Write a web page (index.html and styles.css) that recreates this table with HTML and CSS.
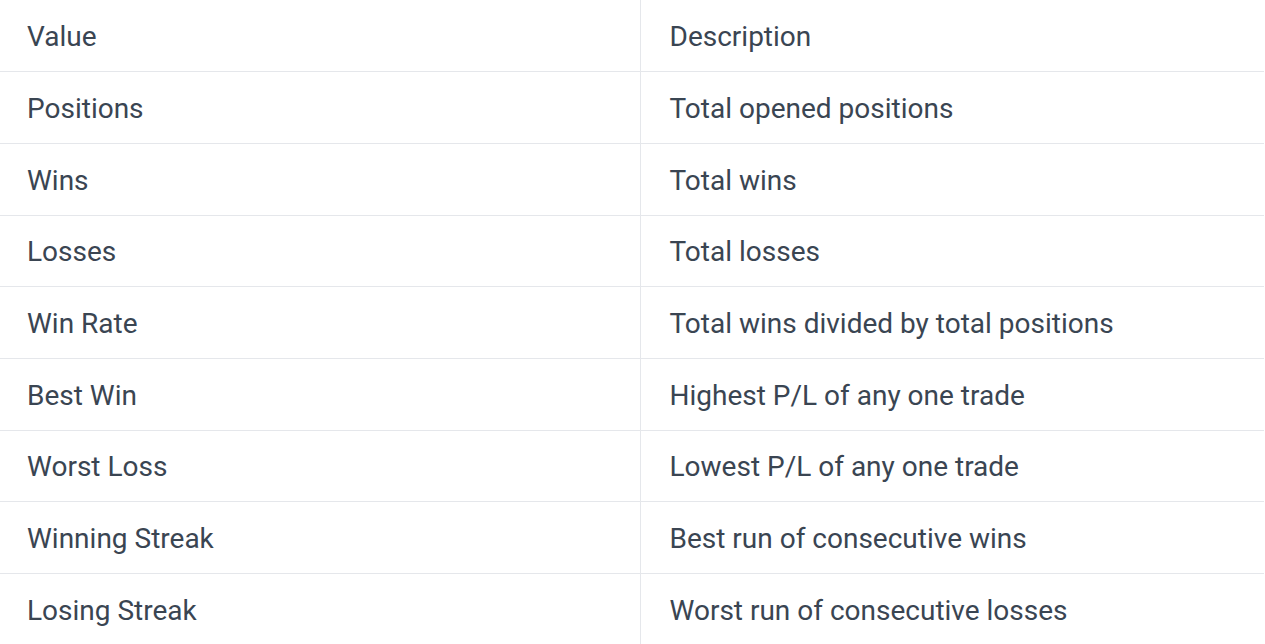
FILE: index.html
```html
<!DOCTYPE html>
<html lang="en">
<head>
<meta charset="utf-8">
<title>Stats</title>
<link rel="stylesheet" href="styles.css">
</head>
<body>
<table class="stats">
  <thead>
    <tr><th>Value</th><th>Description</th></tr>
  </thead>
  <tbody>
    <tr><td>Positions</td><td>Total opened positions</td></tr>
    <tr><td>Wins</td><td>Total wins</td></tr>
    <tr><td>Losses</td><td>Total losses</td></tr>
    <tr><td>Win Rate</td><td>Total wins divided by total positions</td></tr>
    <tr><td>Best Win</td><td>Highest P/L of any one trade</td></tr>
    <tr><td>Worst Loss</td><td>Lowest P/L of any one trade</td></tr>
    <tr><td>Winning Streak</td><td>Best run of consecutive wins</td></tr>
    <tr><td>Losing Streak</td><td>Worst run of consecutive losses</td></tr>
  </tbody>
</table>
</body>
</html>
```

FILE: styles.css
```css
html, body {
  margin: 0;
  padding: 0;
  background: #ffffff;
}
body {
  font-family: Roboto, "Liberation Sans", sans-serif;
  color: #3a4552;
}
.stats {
  width: 1264px;
  border-collapse: collapse;
  table-layout: fixed;
}
.stats th,
.stats td {
  height: 71.7px;
  padding: 2px 0 0 27px;
  font-size: 28px;
  font-weight: 400;
  text-align: left;
  vertical-align: middle;
  border-bottom: 1px solid #e5e7eb;
  box-sizing: border-box;
}
.stats th:first-child,
.stats td:first-child {
  width: 640px;
  border-right: 1px solid #e5e7eb;
}
.stats th + th,
.stats td + td {
  padding-left: 29px;
}
.stats tbody tr:last-child td {
  border-bottom: none;
}
```
